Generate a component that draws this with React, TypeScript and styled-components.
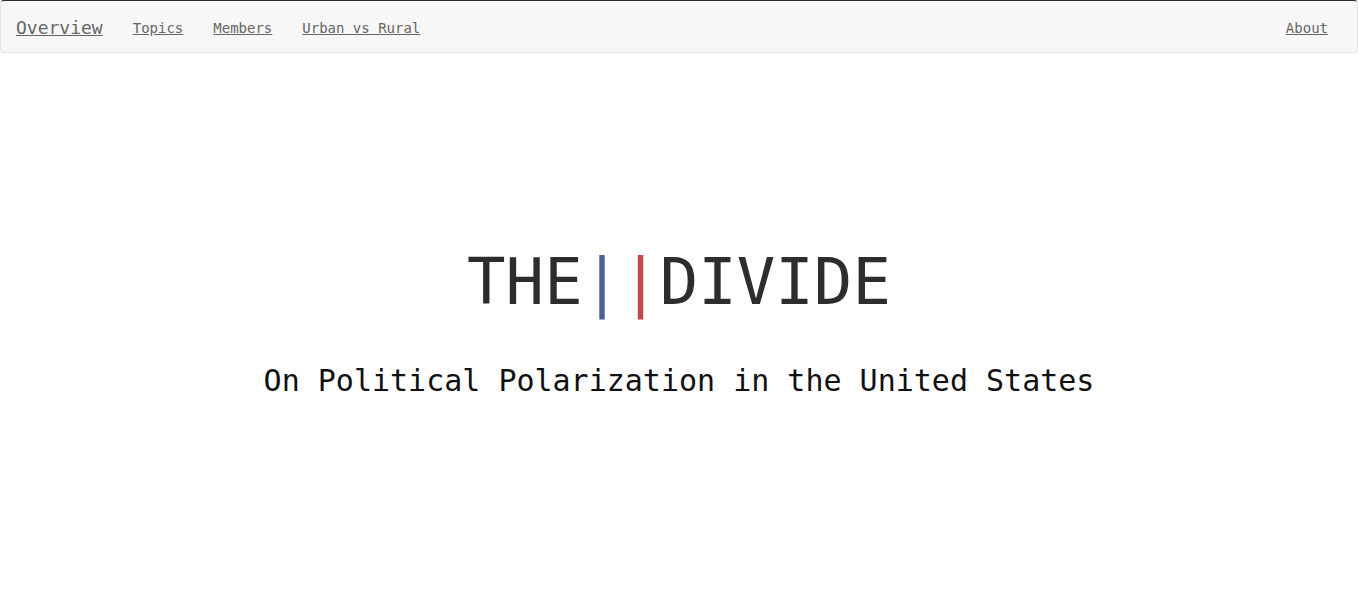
import React from "react";
import styled, { createGlobalStyle } from "styled-components";

const GlobalStyle = createGlobalStyle`
  html, body {
    margin: 0;
    padding: 0;
    background: #fff;
    font-family: "DejaVu Sans Mono", "Liberation Mono", monospace;
  }
`;

const Navbar = styled.nav`
  display: flex;
  align-items: center;
  justify-content: space-between;
  height: 51px;
  background-color: #f7f7f7;
  border: 1px solid #e3e3e3;
  border-top: 1px solid #2a2a2a;
  border-radius: 4px;
`;

const NavGroup = styled.div`
  display: flex;
  align-items: center;
  padding-top: 2px;
  padding-right: 14px;
`;

const NavLink = styled.a<{ $brand?: boolean }>`
  display: block;
  padding: 0 15px;
  color: #666;
  font-size: ${(p) => (p.$brand ? "18px" : "14px")};
  text-decoration: underline;
  cursor: pointer;
  line-height: 20px;
`;

const Hero = styled.section`
  display: flex;
  flex-direction: column;
  align-items: center;
  padding-top: 197px;
`;

const Title = styled.h1`
  margin: 0;
  font-size: 64px;
  font-weight: 400;
  color: #2d2d2d;
  line-height: 1;
  white-space: pre;
`;

const Bar = styled.span<{ $color: string }>`
  color: ${(p) => p.$color};
`;

const Subtitle = styled.h2`
  margin: 52px 0 0;
  font-size: 30px;
  font-weight: 400;
  color: #111;
  line-height: 1;
`;

export default function App() {
  return (
    <>
      <GlobalStyle />
      <Navbar>
        <NavGroup>
          <NavLink $brand>Overview</NavLink>
          <NavLink>Topics</NavLink>
          <NavLink>Members</NavLink>
          <NavLink>Urban vs Rural</NavLink>
        </NavGroup>
        <NavGroup>
          <NavLink>About</NavLink>
        </NavGroup>
      </Navbar>
      <Hero>
        <Title>
          THE<Bar $color="#4c609a">|</Bar>
          <Bar $color="#c8454b">|</Bar>DIVIDE
        </Title>
        <Subtitle>On Political Polarization in the United States</Subtitle>
      </Hero>
    </>
  );
}
